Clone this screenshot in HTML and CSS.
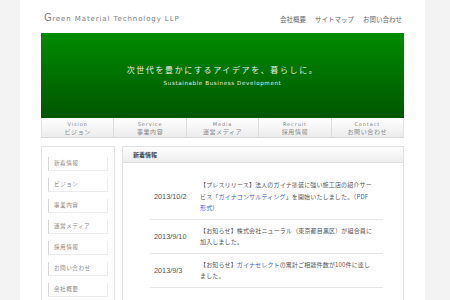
FILE: index.html
```html
<!DOCTYPE html>
<html lang="ja">
<head>
    <meta charset="UTF-8">
    <title>Green Material Technology LLP</title>
    <link rel="stylesheet" href="styles.css">
</head>
<body>
    <div class="page">
        <div class="header">
            <div class="logo"><span class="logo-cap">G</span>reen Material Technology LLP</div>
            <div class="top-links">
                <a href="#">会社概要</a>
                <a href="#">サイトマップ</a>
                <a href="#">お問い合わせ</a>
            </div>
        </div>

        <!-- Main visual -->
        <div class="banner">
            <p class="banner-copy">次世代を豊かにするアイデアを、暮らしに。</p>
            <p class="banner-sub">Sustainable Business Development</p>
        </div>

        <ul class="global-nav">
            <li><span class="en">Vision</span><span class="ja">ビジョン</span></li>
            <li><span class="en">Service</span><span class="ja">事業内容</span></li>
            <li><span class="en">Media</span><span class="ja">運営メディア</span></li>
            <li><span class="en">Recruit</span><span class="ja">採用情報</span></li>
            <li><span class="en">Contact</span><span class="ja">お問い合わせ</span></li>
        </ul>

        <div class="content">
            <ul class="side-nav">
                <li>新着情報</li>
                <li>ビジョン</li>
                <li>事業内容</li>
                <li>運営メディア</li>
                <li>採用情報</li>
                <li>お問い合わせ</li>
                <li>会社概要</li>
            </ul>

            <div class="news">
                <h2 class="news-title">新着情報</h2>
                <div class="news-list">
                    <div class="news-row">
                        <div class="news-date">2013/10/2</div>
                        <p class="news-text">【プレスリリース】法人のガイナ塗装に強い施工店の紹介サービス「<a href="#">ガイナコンサルティング</a>」を開始いたしました。（<a href="#">PDF形式</a>）</p>
                    </div>
                    <div class="news-row">
                        <div class="news-date">2013/9/10</div>
                        <p class="news-text">【お知らせ】株式会社ニューラル（東京都目黒区）が組合員に加入しました。</p>
                    </div>
                    <div class="news-row">
                        <div class="news-date">2013/9/3</div>
                        <p class="news-text">【お知らせ】<a href="#">ガイナセレクト</a>の累計ご相談件数が100件に達しました。</p>
                    </div>
                </div>
            </div>
        </div>
    </div>
</body>
</html>
```

FILE: styles.css
```css
body {
    margin: 0;
    background-color: #f3f3f3;
    font-family: "Liberation Sans", "Noto Sans CJK JP", sans-serif;
    color: #555;
}
ul {
    margin: 0;
    padding: 0;
    list-style: none;
}
a {
    color: #555;
    text-decoration: none;
}

.page {
    width: 363px;
    min-height: 300px;
    margin-left: 20px;
    padding: 0 21px;
    background: #fff;
}

/* Header */
.header {
    height: 33px;
    display: flex;
    justify-content: space-between;
    align-items: center;
}
.logo {
    font-family: "DejaVu Sans", sans-serif;
    font-size: 7px;
    letter-spacing: 0.9px;
    color: #808080;
    padding-left: 3px;
    margin-top: 1px;
}
.logo-cap {
    font-size: 10px;
    letter-spacing: 0.5px;
}
.top-links {
    display: flex;
    gap: 9px;
    font-family: "Noto Sans CJK JP", sans-serif;
    font-size: 6.5px;
    margin-top: 5px;
    padding-right: 2px;
}
.top-links a {
    color: #666;
}

/* Banner */
.banner {
    height: 85px;
    box-sizing: border-box;
    padding-top: 31px;
    background: linear-gradient(#008c00, #005600);
    display: flex;
    flex-direction: column;
    align-items: center;
    color: #e2ece2;
}
.banner p {
    margin: 0;
}
.banner-copy {
    font-family: "Noto Sans CJK JP", sans-serif;
    font-size: 8px;
    line-height: 12px;
    letter-spacing: 1.6px;
}
.banner-sub {
    font-family: "DejaVu Sans", sans-serif;
    font-size: 5.6px;
    line-height: 7px;
    letter-spacing: 0.6px;
    margin-top: 4px !important;
}

/* Global navigation */
.global-nav {
    display: flex;
    height: 19px;
    background: linear-gradient(#ffffff, #ececec);
    border-bottom: 1px solid #d8d8d8;
}
.global-nav li {
    flex: 1;
    display: flex;
    flex-direction: column;
    align-items: center;
    justify-content: center;
    border-left: 1px solid #dcdcdc;
    line-height: 7px;
}
.global-nav li:first-child {
    border-left: 1px solid #e4e4e4;
}
.global-nav li:last-child {
    border-right: 1px solid #e4e4e4;
}
.global-nav .en {
    font-family: "DejaVu Sans", sans-serif;
    font-size: 5px;
    letter-spacing: 0.9px;
    color: #808080;
}
.global-nav .ja {
    font-family: "Noto Sans CJK JP", sans-serif;
    font-size: 6px;
    letter-spacing: 0.6px;
    color: #888;
}

/* Content */
.content {
    display: flex;
    gap: 7px;
    margin-top: 8px;
    align-items: flex-start;
}
.side-nav {
    width: 60px;
    padding: 10px 6px 4px;
    border: 1px solid #e6e6e6;
    border-bottom: none;
    flex-shrink: 0;
}
.side-nav li {
    height: 13px;
    line-height: 13px;
    margin-bottom: 7px;
    padding-left: 5px;
    font-family: "Noto Sans CJK JP", sans-serif;
    font-size: 5.6px;
    letter-spacing: 0.5px;
    color: #888;
    border-left: 1px solid #d6d6d6;
    border-right: 1px solid #ededed;
    border-bottom: 1px solid #ededed;
}

.news {
    flex: 1;
    border: 1px solid #e2e2e2;
    border-bottom: none;
    min-height: 160px;
}
.news-title {
    margin: 0;
    height: 15px;
    line-height: 15px;
    padding-left: 10px;
    font-family: "Noto Sans CJK JP", sans-serif;
    font-size: 6px;
    font-weight: bold;
    color: #444;
    background: linear-gradient(#fdfdfd, #eeeeee);
    border-bottom: 1px solid #dedede;
}
.news-list {
    margin: 11px 20px 0 27px;
}
.news-row {
    display: flex;
    align-items: center;
    padding: 5px 0;
    border-bottom: 1px solid #e6e6e6;
}
.news-date {
    width: 46px;
    padding-left: 4px;
    flex-shrink: 0;
    font-size: 7.3px;
    color: #555;
}
.news-text {
    width: 173px;
    margin: 0;
    font-family: "Noto Sans CJK JP", sans-serif;
    font-size: 6px;
    letter-spacing: 0.15px;
    line-height: 11.5px;
    color: #555;
}
.news-text a {
    color: #3a5fd0;
}
```
